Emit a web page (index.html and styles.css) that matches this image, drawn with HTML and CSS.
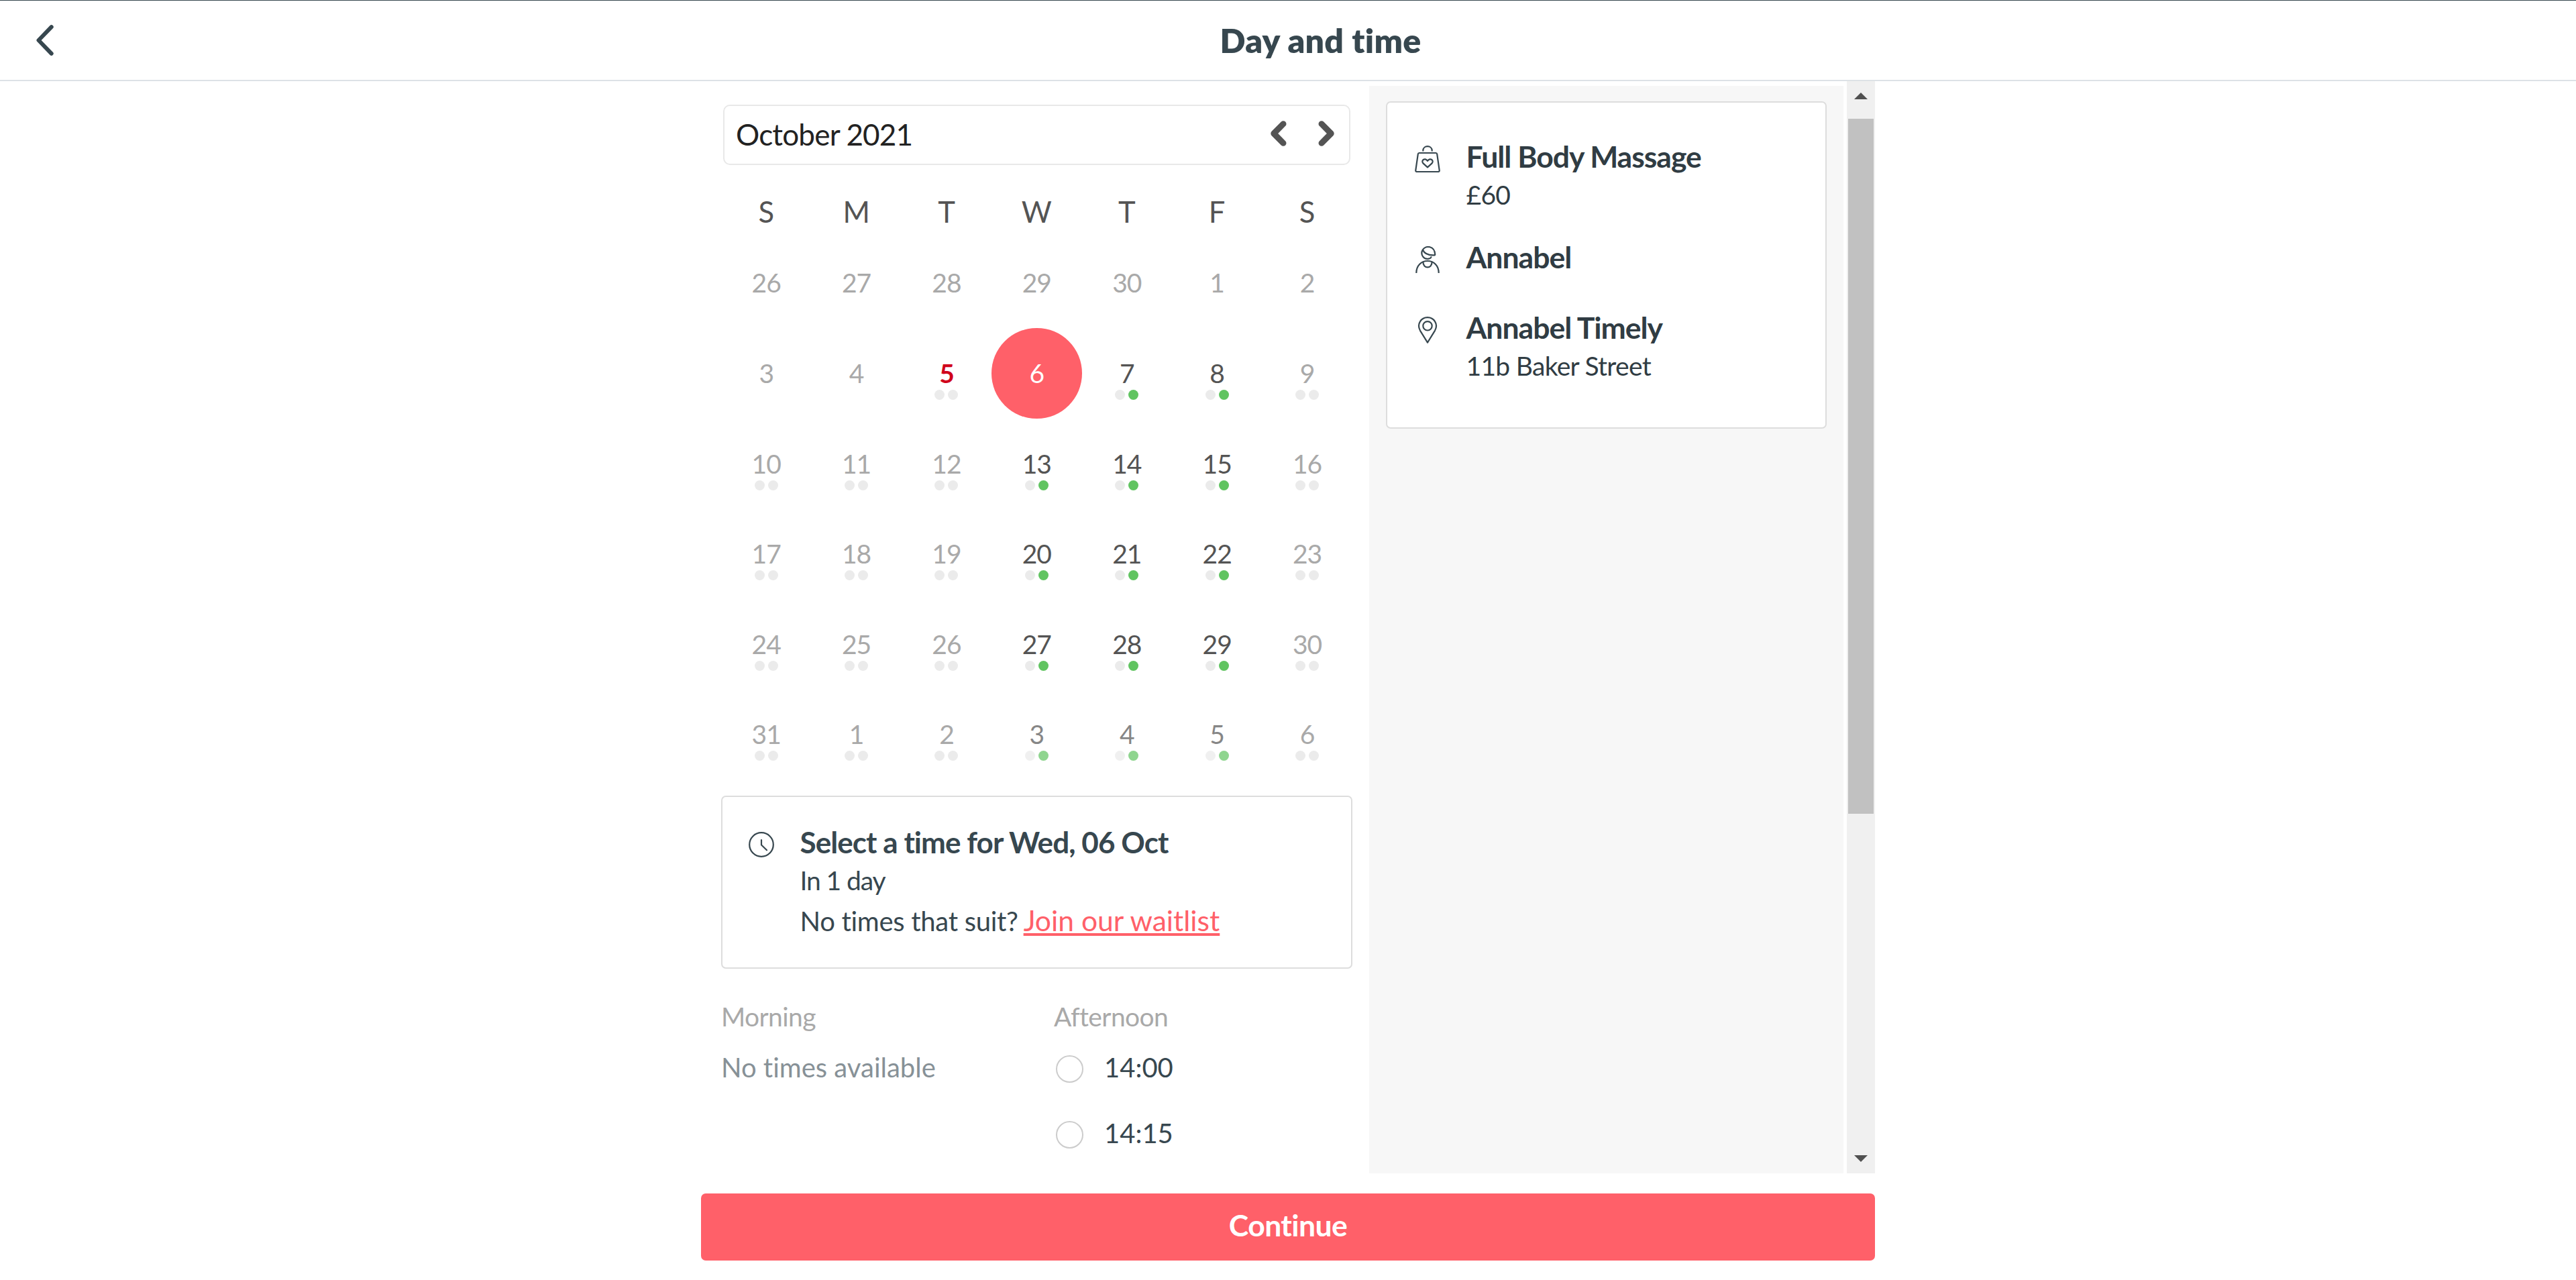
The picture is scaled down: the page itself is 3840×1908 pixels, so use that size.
FILE: index.html
```html
<!DOCTYPE html>
<html lang="en">
<head>
    <meta charset="UTF-8">
    <meta name="viewport" content="width=device-width, initial-scale=1.0">
    <title>Day and time</title>
    <link rel="stylesheet" href="styles.css">
</head>
<body>
    <header class="top-bar">
        <a class="back" href="#" aria-label="Back">
            <svg width="26" height="46" viewBox="0 0 26 46"><path d="M22.7 3.2 L3.5 23 L22.7 42.8"/></svg>
        </a>
        <h1>Day and time</h1>
    </header>

    <main class="booking">
        <!-- Calendar and times -->
        <section class="picker">
            <div class="month-bar">
                <span class="month">October 2021</span>
                <svg class="arrow" width="24" height="38" viewBox="0 0 24 38"><path d="M19 4.7 L4.8 19 L19 33.3"/></svg>
                <svg class="arrow" width="24" height="38" viewBox="0 0 24 38"><path d="M5 4.7 L19.2 19 L5 33.3"/></svg>
            </div>

            <div class="weekdays">
                <span>S</span><span>M</span><span>T</span><span>W</span><span>T</span><span>F</span><span>S</span>
            </div>
            <div class="days" id="days"></div>

            <div class="card time-card">
                <svg class="icon" width="38" height="38" viewBox="0 0 38 38">
                    <circle cx="19" cy="19" r="17.8"/>
                    <path d="M19 12 V19.5 L27 27.3"/>
                </svg>
                <div>
                    <h2>Select a time for Wed, 06 Oct</h2>
                    <p class="in-days">In 1 day</p>
                    <p class="waitlist">No times that suit? <a href="#">Join our waitlist</a></p>
                </div>
            </div>

            <div class="times">
                <div>
                    <h3>Morning</h3>
                    <p class="no-times">No times available</p>
                </div>
                <div>
                    <h3>Afternoon</h3>
                    <label class="slot"><span class="radio"></span>14:00</label>
                    <label class="slot"><span class="radio"></span>14:15</label>
                </div>
            </div>
        </section>

        <!-- Booking summary -->
        <aside class="summary">
            <div class="card summary-card">
                <div class="item">
                    <svg class="icon" width="40" height="40" viewBox="0 0 40 40">
                        <path d="M13.3 7.7 C13.3 -1 26.7 -1 26.7 7.7"/>
                        <path d="M7.6 11 H32.4 Q34 11 34.2 12.6 L37.7 36.8 Q38 39 36 39 H4 Q2 39 2.3 36.8 L5.8 12.6 Q6 11 7.6 11 Z"/>
                        <path d="M20 32.4 L13.4 26.4 C9.8 22.6 15.8 17 20 22.8 C24.2 17 30.2 22.6 26.6 26.4 Z"/>
                    </svg>
                    <div>
                        <h2>Full Body Massage</h2>
                        <p>£60</p>
                    </div>
                </div>
                <div class="item staff">
                    <svg class="icon" width="40" height="40" viewBox="0 0 40 40">
                        <path d="M12.8 5.3 C17.5 -1.8 30.5 -0.6 31.2 12.2 Q31.3 13.4 30 13.4 C22 13.8 15.5 11.5 12.8 5.3 C8.6 12.5 14.5 20.6 22 18.6 Q25 17.8 25.4 16.2"/>
                        <path d="M3.3 39.8 C3.3 28.5 11 22 20 22 C29 22 36.7 28.5 36.7 39.8"/>
                        <path d="M13.4 23.6 C13.2 34 26.8 34 26.6 23.6"/>
                    </svg>
                    <h2>Annabel</h2>
                </div>
                <div class="item">
                    <svg class="icon" width="40" height="40" viewBox="0 0 40 40">
                        <path d="M20 38.6 L9 20.8 C3.5 11 10.5 1.2 20 1.2 C29.5 1.2 36.5 11 31 20.8 Z"/>
                        <circle cx="20" cy="13.8" r="6.7"/>
                    </svg>
                    <div>
                        <h2>Annabel Timely</h2>
                        <p>11b Baker Street</p>
                    </div>
                </div>
            </div>
        </aside>

        <div class="scrollbar">
            <span class="up"></span>
            <span class="thumb"></span>
            <span class="down"></span>
        </div>
    </main>

    <button class="continue">Continue</button>

    <script>
        // 42 cells starting on Sunday 26 September
        const days = document.getElementById('days');

        for (let i = 0; i < 42; i++) {
            const date = new Date(2021, 8, 26 + i);
            const weekday = date.getDay();
            const cell = document.createElement('div');
            const open = i > 10 && weekday >= 3 && weekday <= 5;

            cell.className = 'day';
            if (open) cell.classList.add('open');
            if (open && i > 35) cell.classList.add('next-month');
            if (i === 9) cell.classList.add('today');
            if (i === 10) cell.classList.add('selected');

            cell.innerHTML = '<span class="number">' + date.getDate() + '</span>';
            if (i >= 9 && i !== 10) {
                cell.innerHTML += '<span class="dots"><i></i><i></i></span>';
            }
            days.appendChild(cell);
        }
    </script>
</body>
</html>
```
FILE: styles.css
```css
/* General Page Styling */
* {
    box-sizing: border-box;
}

body {
    margin: 0;
    height: 1908px;
    overflow: hidden;
    background-color: #fff;
    color: #37474f;
    font-family: Lato, sans-serif;
    font-size: 40px;
    font-variant-ligatures: none;
}

h1, h2, h3, p {
    margin: 0;
}

svg {
    display: block;
    flex: none;
    fill: none;
    stroke: #37474f;
    stroke-linecap: round;
    stroke-linejoin: round;
}

/* Header */
.top-bar {
    display: flex;
    align-items: center;
    height: 121px;
    border-top: 1px solid #37474f;
    border-bottom: 2px solid #dde2e6;
}

.back {
    width: 100px;
    padding-left: 54px;
    stroke-width: 6px;
}

h1 {
    flex: 1;
    padding: 0 3px 1px 0;
    text-align: center;
    font-size: 50px;
    font-weight: 800;
    letter-spacing: 0.3px;
    line-height: 60px;
}

.booking {
    display: flex;
    width: 1750px;
    height: 1628px;
    margin: 0 auto;
    overflow: hidden;
}

/* Calendar */
.picker {
    width: 996px;
    padding: 35px 25px 0 30px;
}

.month-bar {
    display: flex;
    align-items: center;
    width: 935px;
    height: 90px;
    margin-left: 3px;
    padding: 0 22px 0 17px;
    border: 2px solid #e8e8e8;
    border-radius: 10px;
}

.month {
    flex: 1;
    padding-bottom: 2px;
    color: #222;
    font-size: 44px;
    letter-spacing: -0.8px;
}

.arrow {
    margin-left: 47.5px;
    stroke: #545454;
    stroke-width: 9px;
    margin-bottom: 4px;
}

.arrow:nth-of-type(1) {
    margin-left: 0;
}

.weekdays, .days {
    display: grid;
    grid-template-columns: repeat(7, 134.4px);
    text-align: center;
}

.weekdays {
    padding-top: 30px;
    color: #545454;
    font-size: 43.5px;
    line-height: 78.4px;
}

.days {
    grid-auto-rows: 134.6px;
}

.day {
    padding-top: 44px;
    border-radius: 50%;
    color: #a9a9a9;
    font-size: 39px;
    letter-spacing: -1px;
    line-height: 46px;
}

.number {
    display: block;
}

.dots {
    display: flex;
    justify-content: center;
    gap: 5px;
    margin-top: 2px;
}

.dots i {
    width: 15px;
    height: 15px;
    border-radius: 50%;
    background-color: #ebebeb;
}

.open {
    color: #545454;
}

.open i:last-child {
    background-color: #61c461;
}

.next-month {
    opacity: 0.7;
}

.today {
    color: #d0021b;
    font-weight: bold;
}

.selected {
    background-color: #ff6069;
    color: #fff;
}

/* Cards */
.card {
    border: 2px solid #ddd;
    border-radius: 7px;
    background-color: #fff;
}

.card h2 {
    font-size: 44.5px;
    font-weight: bold;
    letter-spacing: -1px;
}

.icon {
    stroke-width: 2.2px;
}

.time-card {
    display: flex;
    gap: 38.5px;
    width: 941px;
    height: 258px;
    margin-top: 24px;
    padding: 37px 0 0 39px;
}

.time-card .icon {
    margin-top: 15px;
}

.time-card h2 {
    font-size: 44px;
    letter-spacing: -0.93px;
    line-height: 60px;
}

.in-days {
    font-size: 39px;
    line-height: 54px;
    letter-spacing: -1.1px;
}

.waitlist {
    font-size: 40px;
    letter-spacing: -0.29px;
    line-height: 68px;
}

.waitlist a {
    margin-left: -2px;
    color: #ff6069;
    font-size: 42.6px;
    letter-spacing: 0;
    line-height: 1;
    text-decoration-thickness: 4px;
    text-underline-offset: 3px;
    text-decoration-skip-ink: none;
}

/* Time slots */
.times {
    display: grid;
    grid-template-columns: 496px 1fr;
    margin-top: 46.5px;
}

h3 {
    color: #a9a9a9;
    font-size: 39px;
    font-weight: normal;
    letter-spacing: -0.6px;
    line-height: 50px;
}

.no-times {
    color: #879197;
    line-height: 102px;
}

.slot {
    display: flex;
    align-items: center;
    height: 98px;
    padding: 4px 0 0 3px;
}

.radio {
    width: 41px;
    height: 41px;
    margin: 5px 31px 0 0;
    border: 2px solid #ccc;
    border-radius: 50%;
}

/* Summary panel */
.summary {
    width: 707px;
    margin: 7px 5px 0 0;
    padding: 23px 25px;
    background-color: #f7f7f7;
}

.summary-card {
    height: 488px;
    padding: 50.5px 0 0 40px;
    color: #303c43;
}

.item {
    display: flex;
    gap: 37.5px;
    margin-bottom: 35.5px;
}

.item.staff {
    margin-bottom: 47px;
}

.item .icon {
    margin-top: 13.5px;
}

.item h2 {
    line-height: 58px;
}

.item p {
    padding-top: 1px;
    font-size: 39px;
    letter-spacing: -0.7px;
    line-height: 55.5px;
}

/* Scrollbar */
.scrollbar {
    display: flex;
    flex-direction: column;
    align-items: center;
    width: 42px;
    background-color: #f0f0f0;
}

.up, .down {
    border: 10px solid transparent;
    border-top: 0;
    border-bottom: 10px solid #505050;
}

.up {
    margin: 17px 0 29px;
}

.thumb {
    width: 38px;
    height: 1036px;
    background-color: #c1c1c1;
}

.down {
    margin: auto 0 17px;
    transform: rotate(180deg);
}

/* Continue button */
.continue {
    display: block;
    width: 1750px;
    height: 100px;
    margin: 30px auto 0;
    padding: 0 0 7px;
    border: none;
    border-radius: 7px;
    background-color: #ff6069;
    color: #fff;
    font-family: inherit;
    font-size: 44.5px;
    font-weight: bold;
    font-variant-ligatures: none;
    letter-spacing: -0.6px;
}
```
